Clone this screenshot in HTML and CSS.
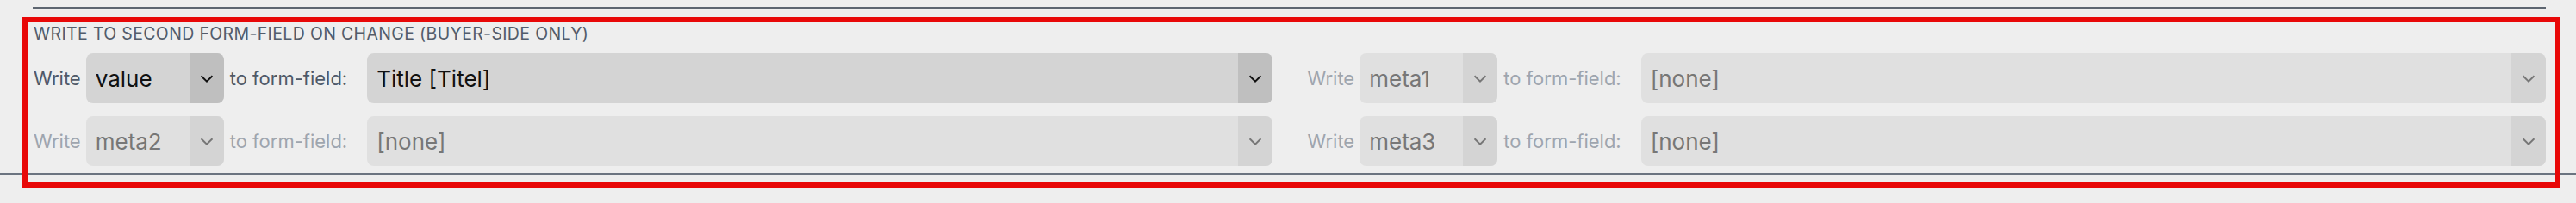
FILE: index.html
```html
<!DOCTYPE html>
<html lang="en">
<head>
<meta charset="utf-8">
<title>Write to second form-field</title>
<link rel="stylesheet" href="styles.css">
</head>
<body>
<div class="page">
  <div class="rule rule-top"></div>
  <section class="writer">
    <h3 class="heading">WRITE TO SECOND FORM-FIELD ON CHANGE (BUYER-SIDE ONLY)</h3>
    <div class="grid">
      <div class="row">
        <span class="label">Write</span>
        <div class="select select-small">
          <span class="select-text">value</span>
          <span class="select-arrow"><svg width="16" height="9" viewBox="0 0 16 9"><path d="M1.5 1.2 8 7.6l6.5-6.4" fill="none" stroke="currentColor" stroke-width="2"/></svg></span>
        </div>
        <span class="label label-to">to form-field:</span>
        <div class="select select-wide">
          <span class="select-text">Title [Titel]</span>
          <span class="select-arrow"><svg width="16" height="9" viewBox="0 0 16 9"><path d="M1.5 1.2 8 7.6l6.5-6.4" fill="none" stroke="currentColor" stroke-width="2"/></svg></span>
        </div>
      </div>
      <div class="row is-disabled">
        <span class="label">Write</span>
        <div class="select select-small">
          <span class="select-text">meta1</span>
          <span class="select-arrow"><svg width="16" height="9" viewBox="0 0 16 9"><path d="M1.5 1.2 8 7.6l6.5-6.4" fill="none" stroke="currentColor" stroke-width="2"/></svg></span>
        </div>
        <span class="label label-to">to form-field:</span>
        <div class="select select-wide">
          <span class="select-text">[none]</span>
          <span class="select-arrow"><svg width="16" height="9" viewBox="0 0 16 9"><path d="M1.5 1.2 8 7.6l6.5-6.4" fill="none" stroke="currentColor" stroke-width="2"/></svg></span>
        </div>
      </div>
      <div class="row is-disabled">
        <span class="label">Write</span>
        <div class="select select-small">
          <span class="select-text">meta2</span>
          <span class="select-arrow"><svg width="16" height="9" viewBox="0 0 16 9"><path d="M1.5 1.2 8 7.6l6.5-6.4" fill="none" stroke="currentColor" stroke-width="2"/></svg></span>
        </div>
        <span class="label label-to">to form-field:</span>
        <div class="select select-wide">
          <span class="select-text">[none]</span>
          <span class="select-arrow"><svg width="16" height="9" viewBox="0 0 16 9"><path d="M1.5 1.2 8 7.6l6.5-6.4" fill="none" stroke="currentColor" stroke-width="2"/></svg></span>
        </div>
      </div>
      <div class="row is-disabled">
        <span class="label">Write</span>
        <div class="select select-small">
          <span class="select-text">meta3</span>
          <span class="select-arrow"><svg width="16" height="9" viewBox="0 0 16 9"><path d="M1.5 1.2 8 7.6l6.5-6.4" fill="none" stroke="currentColor" stroke-width="2"/></svg></span>
        </div>
        <span class="label label-to">to form-field:</span>
        <div class="select select-wide">
          <span class="select-text">[none]</span>
          <span class="select-arrow"><svg width="16" height="9" viewBox="0 0 16 9"><path d="M1.5 1.2 8 7.6l6.5-6.4" fill="none" stroke="currentColor" stroke-width="2"/></svg></span>
        </div>
      </div>
    </div>
  </section>
  <div class="rule rule-bottom"></div>
  <div class="highlight"></div>
</div>
</body>
</html>
```

FILE: styles.css
```css
html, body {
  margin: 0;
  padding: 0;
  background: #eeeeee;
}

body {
  font-family: Inter, "Noto Sans", "Liberation Sans", sans-serif;
  width: 2990px;
  height: 236px;
  overflow: hidden;
}

.page {
  position: relative;
  padding-top: 8px;
}

.rule {
  height: 2px;
  background: #5d6570;
}

.rule-top {
  margin-left: 38px;
  width: 2917px;
}

.rule-bottom {
  width: 2990px;
  margin-top: 8px;
  background: #6b7480;
}

.writer {
  margin-left: 38px;
  width: 2917px;
}

.heading {
  margin: 19px 0 13px 1px;
  font-size: 19.5px;
  line-height: 20px;
  font-weight: 400;
  color: #525c6b;
  letter-spacing: 0.35px;
}

.grid {
  display: grid;
  grid-template-columns: 1fr 1fr;
  column-gap: 40px;
  row-gap: 15px;
}

.row {
  display: flex;
  align-items: center;
  height: 58px;
}

.label {
  font-size: 22px;
  color: #4f5968;
  white-space: nowrap;
  margin-right: 6px;
  padding-left: 1px;
}

.label-to {
  margin-left: 7px;
  margin-right: 23px;
  padding-left: 0;
}

.select {
  display: flex;
  height: 58px;
  border-radius: 8px;
  background: #d4d4d4;
  overflow: hidden;
  color: #111111;
}

.select-small {
  width: 160px;
  flex: none;
}

.select-wide {
  flex: 1;
}

.select-text {
  flex: 1;
  display: flex;
  align-items: center;
  padding-left: 11px;
  font-size: 26px;
  white-space: nowrap;
}

.select-arrow {
  width: 40px;
  flex: none;
  display: flex;
  align-items: center;
  justify-content: center;
  background: #bfbfbf;
}

.is-disabled .label {
  color: #9ea5ae;
}

.is-disabled .select {
  background: #e0e0e0;
  color: #777777;
}

.is-disabled .select-arrow {
  background: #d4d4d4;
}

.highlight {
  position: absolute;
  left: 26px;
  top: 20px;
  width: 2946px;
  height: 198px;
  box-sizing: border-box;
  border: 6px solid #e80808;
  pointer-events: none;
}
```
